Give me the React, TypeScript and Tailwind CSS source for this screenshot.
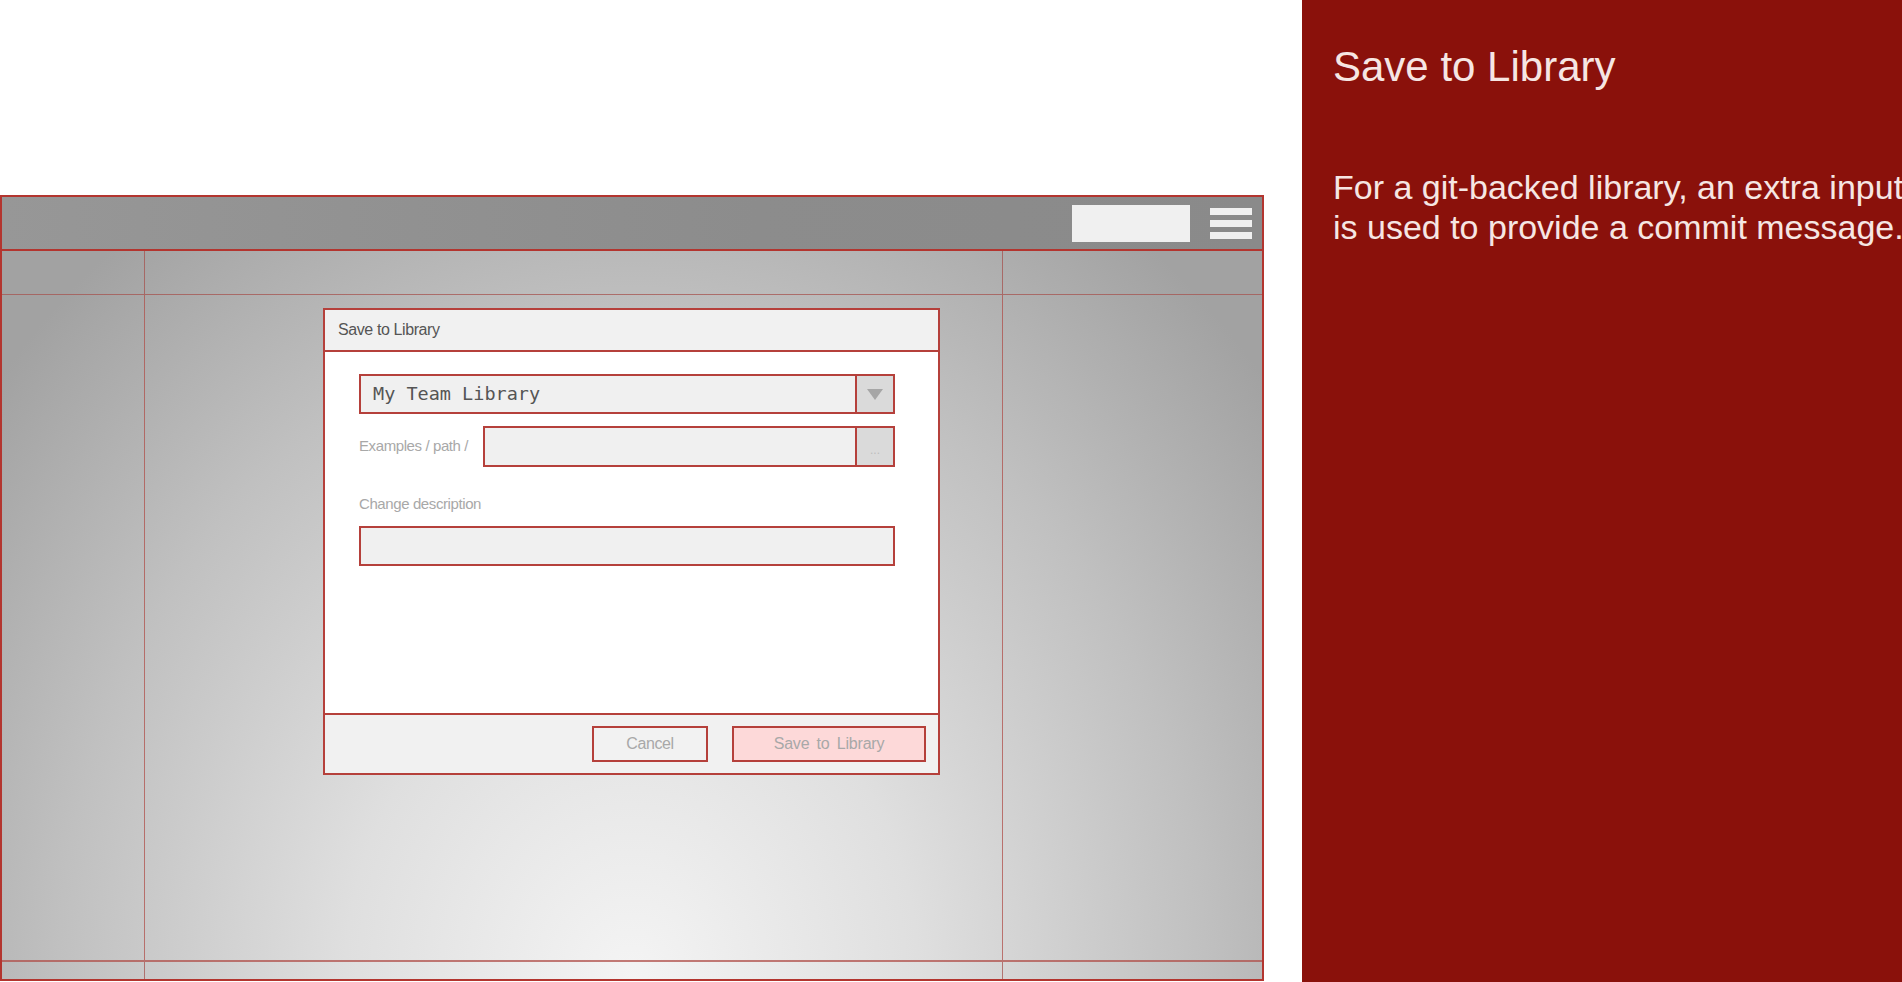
import React from "react";

export default function App() {
  return (
    <div className="w-[1902px] h-[982px] overflow-hidden bg-white flex font-['Liberation_Sans',Arial,sans-serif]">
      {/* Wireframe area */}
      <div className="w-[1302px] shrink-0 pt-[195px]">
        <div className="w-[1264px] h-[786px] border-2 border-[#b3352f] flex flex-col">
          {/* header bar */}
          <header className="h-[54px] shrink-0 border-b-2 border-[#b3352f] bg-[linear-gradient(90deg,#979797,#8c8c8c_60%,#8a8a8a)] flex items-center justify-end pr-[10px] gap-[20px]">
            <div className="w-[118px] h-[37px] bg-[#f0f0f0] mt-[1px]" />
            <div className="w-[42px] flex flex-col gap-[5px]">
              <div className="h-[7px] bg-[#f0f0f0]" />
              <div className="h-[7px] bg-[#f0f0f0]" />
              <div className="h-[7px] bg-[#f0f0f0]" />
            </div>
          </header>

          {/* body */}
          <div className="relative flex-1 grid grid-cols-[143px_858px_1fr] grid-rows-[44px_1fr_17px] bg-[radial-gradient(ellipse_65%_130%_at_50%_100%,#f4f4f4_0%,#dfdfdf_35%,#c0c0c0_70%,#a2a2a2_100%)]">
            <div className="border-r border-b border-[#a5534f]/75" />
            <div className="border-r border-b border-[#a5534f]/75" />
            <div className="border-b border-[#a5534f]/75" />
            <div className="border-r border-b-2 border-[#b0504b]/75" />
            <div className="border-r border-b-2 border-[#b0504b]/75" />
            <div className="border-b-2 border-[#b0504b]/75" />
            <div className="border-r border-[#a5534f]/75" />
            <div className="border-r border-[#a5534f]/75" />
            <div />

            {/* modal dialog */}
            <div className="absolute left-[321px] top-[57px] w-[617px] h-[467px] border-2 border-[#b5403b] flex flex-col bg-white">
              <div className="h-[42px] shrink-0 border-b-2 border-[#b5403b] bg-[#f1f1f1] flex items-center pl-[13px] text-[16px] text-[#555] tracking-[-0.4px]">
                Save to Library
              </div>
              <div className="flex-1 bg-white pl-[34px] pr-[43px] pt-[22px] flex flex-col">
                {/* select */}
                <div className="h-[40px] border-2 border-[#b5403b] bg-[#f0f0f0] flex">
                  <div className="flex-1 flex items-center pl-[12px] font-['DejaVu_Sans_Mono',monospace] text-[18.5px] text-[#555]">
                    My Team Library
                  </div>
                  <div className="w-[38px] border-l-2 border-[#b5403b] bg-[#dadada] flex items-center justify-center">
                    <svg width="16" height="11" viewBox="0 0 16 11">
                      <polygon points="0,0 16,0 8,11" fill="#a6a6a6" />
                    </svg>
                  </div>
                </div>
                {/* path row */}
                <div className="mt-[12px] h-[41px] flex items-center">
                  <div className="w-[124px] shrink-0 whitespace-nowrap text-[15px] text-[#a8a8a8] tracking-[-0.4px]">
                    Examples / path /
                  </div>
                  <div className="flex-1 h-[41px] border-2 border-[#b5403b] bg-[#f0f0f0] flex">
                    <div className="flex-1" />
                    <div className="w-[38px] border-l-2 border-[#b5403b] bg-[#dadada] flex items-center justify-center text-[12px] text-[#bdbdbd] pt-[6px]">
                      ...
                    </div>
                  </div>
                </div>
                <div className="mt-[28px] leading-[18px] text-[15px] text-[#a8a8a8] tracking-[-0.4px]">
                  Change description
                </div>
                <div className="mt-[13px] h-[40px] border-2 border-[#b5403b] bg-[#f0f0f0]" />
              </div>
              <div className="h-[60px] shrink-0 border-t-2 border-[#b5403b] bg-[#f1f1f1] flex items-center justify-end pr-[12px] gap-[24px]">
                <div className="w-[116px] h-[36px] border-2 border-[#b5403b] bg-[#f2f2f2] flex items-center justify-center text-[16px] text-[#a8a8a8] tracking-[-0.4px]">
                  Cancel
                </div>
                <div className="w-[194px] h-[36px] border-2 border-[#b5403b] bg-[#fdd9d9] flex items-center justify-center text-[16px] text-[#a8a8a8] tracking-[-0.2px] [word-spacing:3px]">
                  Save to Library
                </div>
              </div>
            </div>
          </div>
        </div>
      </div>

      {/* Right annotation panel */}
      <aside className="flex-1 bg-[#8a110b] overflow-hidden pl-[31px] pt-[43px] text-[#f6e6e3]">
        <div className="text-[42px] leading-[48px] whitespace-nowrap">Save to Library</div>
        <div className="mt-[76px] text-[34px] leading-[40px] whitespace-nowrap">
          For a git-backed library, an extra input
          <br />
          is used to provide a commit message.
        </div>
      </aside>
    </div>
  );
}
